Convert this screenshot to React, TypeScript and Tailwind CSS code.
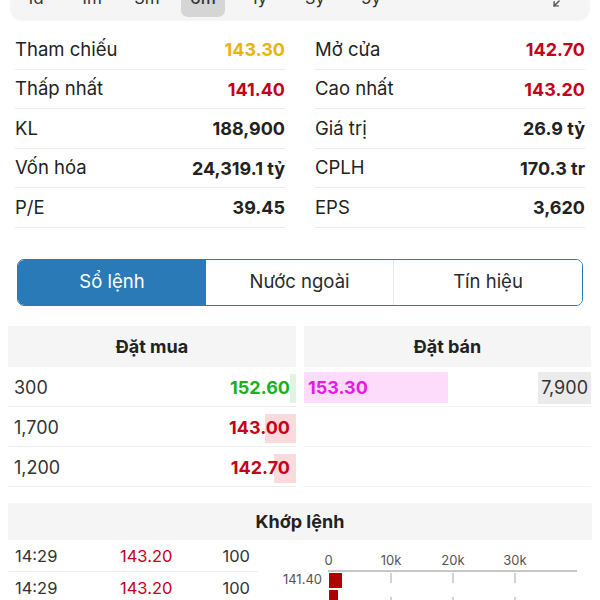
import { Maximize2 } from "lucide-react"

interface Stat {
  label: string
  value: string
  color?: string
}

const leftStats: Stat[] = [
  { label: "Tham chiếu", value: "143.30", color: "text-[#e6b40c]" },
  { label: "Thấp nhất", value: "141.40", color: "text-[#c4001c]" },
  { label: "KL", value: "188,900" },
  { label: "Vốn hóa", value: "24,319.1 tỷ" },
  { label: "P/E", value: "39.45" },
]

const rightStats: Stat[] = [
  { label: "Mở cửa", value: "142.70", color: "text-[#c4001c]" },
  { label: "Cao nhất", value: "143.20", color: "text-[#c4001c]" },
  { label: "Giá trị", value: "26.9 tỷ" },
  { label: "CPLH", value: "170.3 tr" },
  { label: "EPS", value: "3,620" },
]

const periods = ["1d", "1m", "3m", "6m", "1y", "3y", "5y"]

const bids = [
  { vol: "300", price: "152.60", color: "text-[#1cb01c]", bar: "bg-[#dff5df]", width: 6 },
  { vol: "1,700", price: "143.00", color: "text-[#c4001c]", bar: "bg-[#fbdadd]", width: 31 },
  { vol: "1,200", price: "142.70", color: "text-[#c4001c]", bar: "bg-[#fbdadd]", width: 22 },
]

const trades = [
  { time: "14:29", price: "143.20", vol: "100" },
  { time: "14:29", price: "143.20", vol: "100" },
]

function StatColumn({ stats }: { stats: Stat[] }) {
  return (
    <div className="flex flex-col">
      {stats.map((s) => (
        <div key={s.label} className="flex h-[39.5px] items-center justify-between border-b border-[#ececec] pt-[1px]">
          <span className="text-[18.5px] text-[#222]">{s.label}</span>
          <span className={`font-bold ${s.color ?? "text-[#222]"}`}>{s.value}</span>
        </div>
      ))}
    </div>
  )
}

function TradeChart() {
  return (
    <svg width="320" height="64" viewBox="0 0 320 64" className="block">
      <g fill="#555" fontSize="13" textAnchor="middle">
        <text x="58.5" y="25">0</text>
        <text x="121" y="25">10k</text>
        <text x="183" y="25">20k</text>
        <text x="245" y="25">30k</text>
        <text x="52" y="44" textAnchor="end">141.40</text>
      </g>
      <line x1="58" y1="31" x2="307" y2="31" stroke="#b5b5b5" strokeWidth="1.5" />
      <g stroke="#c4c4c4" strokeWidth="1.5" strokeDasharray="10 14">
        <line x1="121" y1="33" x2="121" y2="64" />
        <line x1="183" y1="33" x2="183" y2="64" />
        <line x1="245" y1="33" x2="245" y2="64" />
      </g>
      <rect x="59" y="33" width="13" height="15" fill="#b00000" />
      <rect x="59" y="50" width="9" height="14" fill="#b00000" />
    </svg>
  )
}

export default function App() {
  return (
    <div className="h-[600px] w-[600px] overflow-hidden bg-white text-[18px] text-[#222]" style={{ fontFamily: "Inter, 'Noto Sans', sans-serif" }}>
      {/* period selector, cut off at the top */}
      <div className="mx-[11px] -mt-[21px] flex h-[40px] items-center rounded-[10px] bg-[#f5f5f5] px-[2px] shadow-[0_1px_3px_rgba(0,0,0,0.08)]">
        {periods.map((p) => (
          <div
            key={p}
            className={`mr-[12px] flex h-[36px] w-[44px] items-center justify-center rounded-[7px] text-[17px] text-[#333] ${p === "6m" ? "bg-[#d5d5d5] font-medium" : ""}`}
          >
            {p}
          </div>
        ))}
        <div className="ml-auto mr-[18px] flex items-center text-[#555]">
          <Maximize2 size={17} strokeWidth={2} />
        </div>
      </div>

      {/* stats */}
      <div className="mt-[11px] grid grid-cols-2 gap-x-[30px] px-[15px]">
        <StatColumn stats={leftStats} />
        <StatColumn stats={rightStats} />
      </div>

      {/* tabs */}
      <div className="mx-[17px] mt-[31px] grid h-[47px] grid-cols-3 overflow-hidden rounded-[7px] border border-[#2b7ab8] text-[18.5px]">
        <div className="flex items-center justify-center bg-[#2b7ab8] text-white">Sổ lệnh</div>
        <div className="flex items-center justify-center border-r border-[#e6e6e6] bg-white text-[#2a2a2a]">Nước ngoài</div>
        <div className="flex items-center justify-center bg-white text-[#2a2a2a]">Tín hiệu</div>
      </div>

      {/* order book */}
      <div className="mt-[20px] grid grid-cols-[288px_287px] gap-x-[8px] pl-[8px]">
        <div>
          <div className="flex h-[41px] items-center justify-center bg-[#f5f5f5] font-bold">Đặt mua</div>
          {bids.map((b) => (
            <div key={b.price} className="flex h-[40px] items-center justify-between border-b border-[#ededed] pt-[3px] pl-[6px]">
              <span className="text-[#333]">{b.vol}</span>
              <div className="relative flex h-full items-center pr-[6px]">
                <div className={`absolute top-[4px] right-0 bottom-[3px] ${b.bar}`} style={{ width: b.width }} />
                <span className={`relative font-bold ${b.color}`}>{b.price}</span>
              </div>
            </div>
          ))}
        </div>
        <div>
          <div className="flex h-[41px] items-center justify-center bg-[#f5f5f5] font-bold">Đặt bán</div>
          <div className="flex h-[40px] items-center justify-between border-b border-[#f3f3f3] pt-[3px]">
            <div className="flex h-[31px] w-[144px] items-center bg-[#fddcfb] pl-[4px] font-bold text-[#e21de2]">153.30</div>
            <div className="flex h-[32px] items-center bg-[#ebebeb] px-[3px] text-[#333]">7,900</div>
          </div>
          <div className="h-[40px] border-b border-[#f3f3f3]" />
          <div className="h-[40px] border-b border-[#f3f3f3]" />
        </div>
      </div>

      {/* matched orders */}
      <div className="mx-[8px] mt-[16px] flex h-[37px] items-center justify-center bg-[#f5f5f5] font-bold">Khớp lệnh</div>
      <div className="flex pl-[8px]">
        <div className="w-[250px] text-[16.5px]">
          {trades.map((t, i) => (
            <div key={i} className="grid h-[32px] grid-cols-[112px_1fr_auto] items-center border-b border-[#ededed] pt-[3px] pr-[8px]">
              <span className="pl-[7px] text-[#333]">{t.time}</span>
              <span className="text-[#c4001c]">{t.price}</span>
              <span className="text-[#333]">{t.vol}</span>
            </div>
          ))}
        </div>
        <div className="ml-[12px]">
          <TradeChart />
        </div>
      </div>
    </div>
  )
}
